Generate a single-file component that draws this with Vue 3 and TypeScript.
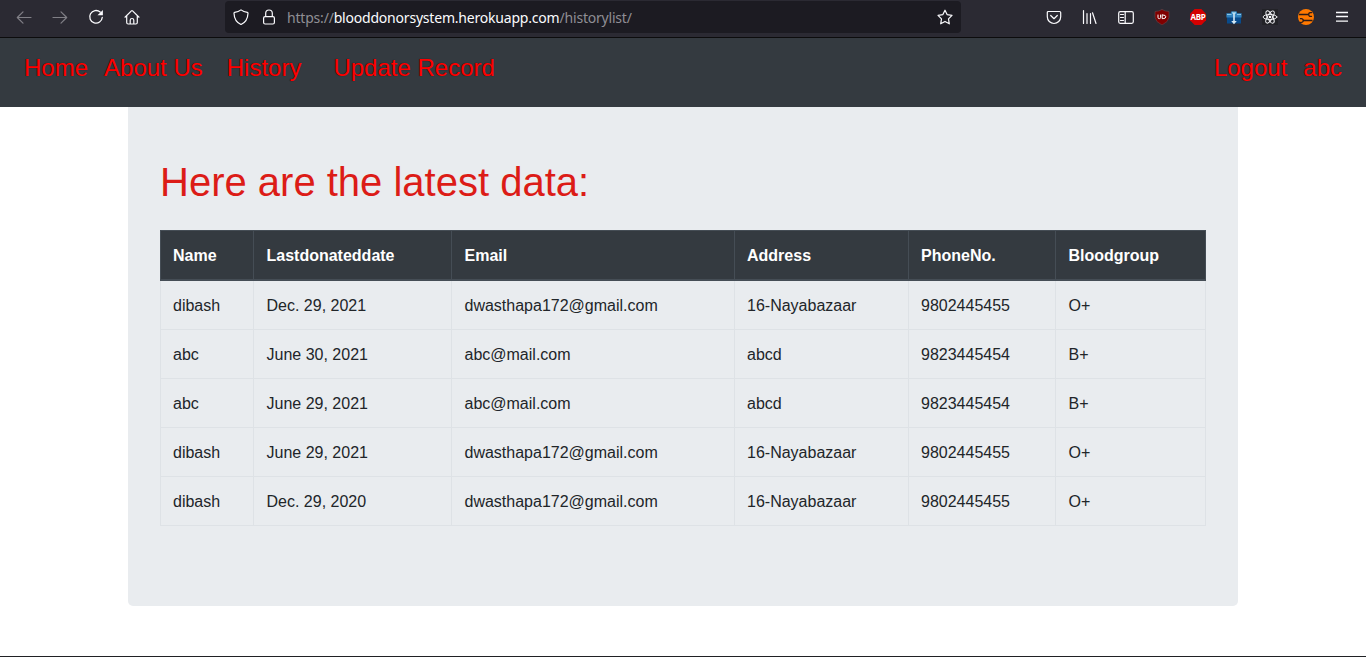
<script setup lang="ts">
interface Donation {
  name: string
  date: string
  email: string
  address: string
  phone: string
  group: string
}

const headings: string[] = ['Name', 'Lastdonateddate', 'Email', 'Address', 'PhoneNo.', 'Bloodgroup']

const rows: Donation[] = [
  { name: 'dibash', date: 'Dec. 29, 2021', email: 'dwasthapa172@gmail.com', address: '16-Nayabazaar', phone: '9802445455', group: 'O+' },
  { name: 'abc', date: 'June 30, 2021', email: 'abc@mail.com', address: 'abcd', phone: '9823445454', group: 'B+' },
  { name: 'abc', date: 'June 29, 2021', email: 'abc@mail.com', address: 'abcd', phone: '9823445454', group: 'B+' },
  { name: 'dibash', date: 'June 29, 2021', email: 'dwasthapa172@gmail.com', address: '16-Nayabazaar', phone: '9802445455', group: 'O+' },
  { name: 'dibash', date: 'Dec. 29, 2020', email: 'dwasthapa172@gmail.com', address: '16-Nayabazaar', phone: '9802445455', group: 'O+' },
]
</script>

<template>
  <div class="window">
    <header class="toolbar">
      <div class="controls">
        <svg class="icon dim" viewBox="0 0 16 16"><path d="M15 8.500H1.500M7 2.800 1.300 8.500 7 14.200" /></svg>
        <svg class="icon dim" viewBox="0 0 16 16"><path d="M1 8.500h13.500M9 2.800l5.700 5.700L9 14.200" /></svg>
        <svg class="icon" viewBox="0 0 16 16">
          <path class="bold" d="M12.200 3.100A6.300 6.300 0 1 0 14.300 8.300" />
          <path class="solid" d="M14.900 1v5.300h-5.400z" />
        </svg>
        <svg class="icon home" viewBox="0 0 16 16">
          <path d="M1 8.200 7.400 1.900q.6-.5 1.200 0L15 8.200M2.700 7v6.500q0 1.500 1.500 1.500h7.600q1.500 0 1.500-1.500V7M6.200 15v-3.700a1.800 1.800 0 0 1 3.600 0V15" />
        </svg>
      </div>
      <div class="address">
        <svg class="icon" viewBox="0 0 16 16"><path d="M8 .9Q10.500 2.900 14.400 3.400q.6.100.6.800C14.800 9.500 12.500 13.500 8 15.500 3.500 13.500 1.200 9.500 1 4.200q0-.7.6-.8Q5.500 2.900 8 .9z" /></svg>
        <svg class="icon lock" viewBox="0 0 16 16"><rect x="2.600" y="7.600" width="10.800" height="7.400" rx="1.500" /><path d="M4.700 7.500V4.300a3.300 3.300 0 0 1 6.600 0v3.200" /></svg>
        <span class="url">https://<b>blooddonorsystem.herokuapp.com</b>/historylist/</span>
        <svg class="icon star" viewBox="0 0 16 16"><path d="m8 1.200 2.100 4.400 4.900.7-3.500 3.500.8 5L8 12.400l-4.300 2.400.8-5L1 6.300l4.900-.7z" /></svg>
      </div>
      <div class="extensions">
        <svg class="icon" viewBox="0 0 16 16"><path d="M2.400 2.500h11.200q1.100 0 1.100 1.100v4.200a6.700 6.700 0 0 1-13.400 0V3.600q0-1.100 1.100-1.100zM4.700 6.500 8 9.700l3.300-3.200" /></svg>
        <svg class="icon" viewBox="0 0 16 16"><path d="M1.500 1.500v13M5 4.500v10M8.500 4.500v10M10.500 3.800l3.500 10.700" /></svg>
        <svg class="icon" viewBox="0 0 16 16"><rect x=".7" y="2.700" width="14.600" height="11.600" rx="1.500" /><path d="M7.200 3v11M2.500 5.500h3M2.500 8.500h3M2.500 11.500h3" /></svg>
        <svg class="icon" viewBox="0 0 16 16">
          <path class="ublock" d="M8 .5Q11 2.400 15 2.500v5.800Q14.500 13 8 16 1.500 13 1 8.300V2.500Q5 2.400 8 .5z" />
          <path class="ub-mark" d="M4 6v2.500q0 1.100 1.100 1.100h.4q1.100 0 1.100-1.100V6M8.200 6v3.600h1q2.600 0 2.600-1.800T9.200 6z" />
        </svg>
        <svg class="icon abp-icon" viewBox="0 0 16 16">
          <path class="abp" d="M4.700 0h6.600L16 4.700v6.600L11.300 16H4.700L0 11.300V4.700z" />
          <text class="abp-text" x="8" y="11">ABP</text>
        </svg>
        <svg class="icon" viewBox="0 0 16 16">
          <path class="blue-dark" d="M1 7.500h14v7H1z" />
          <path class="blue" d="M.4 4.200h4.500V2.500H11v1.700h4.600v4.300H.4z" />
          <path class="blue-light" d="M6 2.800h4v2H6zM1 5h4.500v1H1zM11 5h4v1h-4z" />
          <path class="arrow" d="M7.200 4h1.600v8h2L8 15.300 5.200 12h2z" />
        </svg>
        <svg class="icon" viewBox="0 0 16 16">
          <rect class="react-bg" width="16" height="16" />
          <g class="atom">
            <ellipse cx="8" cy="8" rx="6.900" ry="2.600" />
            <ellipse cx="8" cy="8" rx="6.900" ry="2.600" transform="rotate(60 8 8)" />
            <ellipse cx="8" cy="8" rx="6.900" ry="2.600" transform="rotate(120 8 8)" />
          </g>
          <circle class="solid" cx="8" cy="8" r="1.300" />
        </svg>
        <svg class="icon" viewBox="0 0 16 16">
          <circle class="orange" cx="8" cy="8" r="8" />
          <path class="tools" d="M1 5.500h9.500M5 11.500h9.500" />
          <path class="claw" d="M13.500 3.700q-2.800-.5-2.800 1.800t2.800 1.800M2.500 9.700q2.700-.4 2.700 1.800t-2.700 1.800" />
        </svg>
        <svg class="icon" viewBox="0 0 16 16"><path class="menu" d="M2 3.500h12M2 7.500h12M2 12.200h12" /></svg>
      </div>
    </header>

    <nav class="navbar">
      <a>Home</a>
      <a>About Us</a>
      <a class="history">History</a>
      <a class="update">Update Record</a>
      <a class="logout">Logout</a>
      <a>abc</a>
    </nav>

    <main class="panel">
      <h1>Here are the latest data:</h1>
      <table>
        <colgroup>
          <col class="c-name"><col class="c-date"><col class="c-email"><col class="c-address"><col class="c-phone"><col class="c-group">
        </colgroup>
        <thead>
          <tr><th v-for="heading in headings" :key="heading">{{ heading }}</th></tr>
        </thead>
        <tbody>
          <tr v-for="(row, index) in rows" :key="index">
            <td>{{ row.name }}</td>
            <td>{{ row.date }}</td>
            <td>{{ row.email }}</td>
            <td>{{ row.address }}</td>
            <td>{{ row.phone }}</td>
            <td>{{ row.group }}</td>
          </tr>
        </tbody>
      </table>
    </main>
  </div>
</template>

<style>
body {
  margin: 0;
  overflow: hidden;
}
</style>

<style scoped>
.window {
  box-sizing: border-box;
  width: 1366px;
  height: 657px;
  background: #fff;
  border-bottom: 1px solid #202124;
  font-family: "Liberation Sans", Arial, sans-serif;
  overflow: hidden;
}

.toolbar {
  display: flex;
  box-sizing: border-box;
  height: 38px;
  background: #2b2a33;
  border-bottom: 1px solid #0c0c0d;
}

.controls {
  display: flex;
  gap: 20px;
  width: 209px;
  padding: 9px 0 0 16px;
}

.icon {
  flex: none;
  display: block;
  width: 16px;
  height: 16px;
  fill: none;
  stroke: #fbfbfe;
  stroke-width: 1.2;
  stroke-linecap: round;
  stroke-linejoin: round;
}

.dim { stroke: #807f86; }
.bold { stroke-width: 1.3; }
.solid { fill: #fbfbfe; stroke: none; }
.home { margin-left: -0.5px; }

.address {
  display: flex;
  align-items: center;
  box-sizing: border-box;
  width: 736px;
  height: 32px;
  margin-top: 1px;
  padding: 0 8px;
  background: #1c1b22;
  border-radius: 4px;
}

.lock { margin-left: 12px; }

.url {
  width: 346px;
  margin-left: 10px;
  padding-top: 2px;
  color: #8f8e94;
  font: 14px/20px "Noto Sans", "Open Sans", sans-serif;
  letter-spacing: -0.2px;
  white-space: nowrap;
}

.url b { color: #fbfbfe; font-weight: 400; }
.star { margin-left: auto; }

.extensions {
  display: flex;
  gap: 20px;
  margin-left: 85px;
  padding-top: 9px;
}

.ublock { fill: #800000; stroke: #65464c; stroke-width: 0.6; }
.ub-mark { stroke: #fff; stroke-width: 1; }
.abp-icon { overflow: visible; }
.abp { fill: #d40000; stroke: none; }

.abp-text {
  fill: #fff;
  stroke: none;
  font: bold 8px "Noto Sans", "Open Sans", sans-serif;
  letter-spacing: -0.3px;
  text-anchor: middle;
}

.blue { fill: #2f80bd; stroke: none; }
.blue-dark { fill: #084b8c; stroke: none; }
.blue-light { fill: #86c5e7; stroke: none; }
.arrow { fill: #d5e8f4; stroke: none; }
.react-bg { fill: #222227; stroke: none; }
.atom { stroke-width: 0.9; }
.orange { fill: #ff7900; stroke: none; }
.tools { stroke: #2b1b17; stroke-width: 1.4; stroke-linecap: butt; }
.claw { stroke: #2b1b17; stroke-width: 1.3; }
.menu { stroke-width: 1.3; stroke-linecap: butt; }

.navbar {
  display: flex;
  box-sizing: border-box;
  height: 69px;
  padding: 12px 24px 0;
  background: #343a40;
  color: #f00;
  font-size: 24px;
  line-height: 36px;
  text-shadow: 0 0 1px rgba(0, 0, 0, 0.7);
  white-space: nowrap;
}

.navbar a + a { margin-left: 16px; }
.navbar .history { margin-left: 24px; }
.navbar .update { margin-left: 32px; }
.navbar .logout { margin-left: auto; }

.panel {
  box-sizing: border-box;
  width: 1110px;
  height: 499px;
  margin: 0 auto;
  padding: 51px 32px 0;
  background: #e9ecef;
  border-radius: 0 0 5px 5px;
}

h1 {
  margin: 0 0 24px;
  color: #dc1c17;
  font-size: 40px;
  font-weight: 400;
  line-height: 48px;
}

table {
  width: 1046px;
  table-layout: fixed;
  border-collapse: collapse;
  color: #212529;
  font-size: 16px;
  line-height: 24px;
}

th,
td {
  padding: 13px 12px 11px;
  border: 1px solid #dee2e6;
  text-align: left;
}

th:nth-child(2), td:nth-child(2),
th:nth-child(3), td:nth-child(3),
th:nth-child(6), td:nth-child(6) {
  padding-left: 12.5px;
}

th {
  background: #343a40;
  border-color: #454d55;
  border-bottom-width: 2px;
  color: #fff;
}

.c-name { width: 93px; }
.c-date { width: 198px; }
.c-email { width: 283px; }
.c-address { width: 174px; }
.c-phone { width: 147px; }
.c-group { width: 150px; }
</style>
